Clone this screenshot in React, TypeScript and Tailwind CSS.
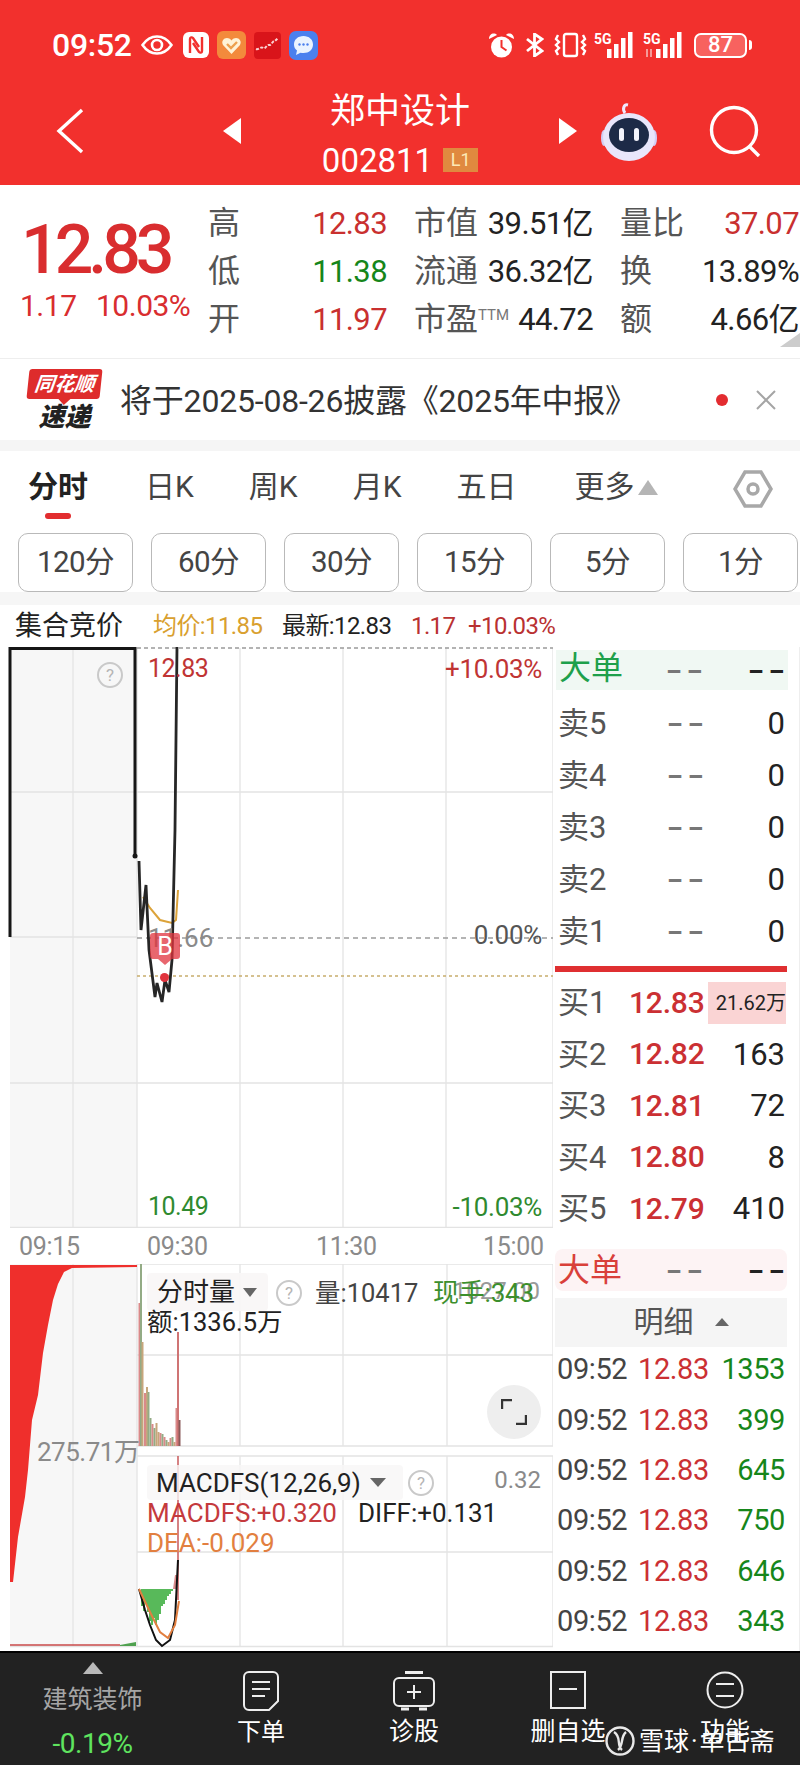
const sellRows = ['卖5', '卖4', '卖3', '卖2', '卖1']

const buyRows = [
  { label: '买1', price: '12.83', vol: '' },
  { label: '买2', price: '12.82', vol: '163' },
  { label: '买3', price: '12.81', vol: '72' },
  { label: '买4', price: '12.80', vol: '8' },
  { label: '买5', price: '12.79', vol: '410' },
]

const trades = ['1353', '399', '645', '750', '646', '343']

const periods = ['120分', '60分', '30分', '15分', '5分', '1分']

const volumeBars = [
  [138.5, 1303, '#d98a8a'],
  [140, 1264, '#93ab85'],
  [141.5, 1342, '#c7a67c'],
  [144, 1393, '#d98a8a'],
  [146, 1387, '#c7a67c'],
  [147.5, 1392, '#93ab85'],
  [149.5, 1418, '#93ab85'],
  [151.5, 1424, '#d98a8a'],
  [153.5, 1428, '#93ab85'],
  [155.5, 1423, '#c7a67c'],
  [157.5, 1432, '#c7a67c'],
  [159.5, 1433, '#d98a8a'],
  [161.5, 1434, '#93ab85'],
  [163.5, 1437, '#d98a8a'],
  [165.5, 1440, '#93ab85'],
  [167.5, 1442, '#c7a67c'],
  [169.5, 1438, '#d98a8a'],
  [171.5, 1437, '#93ab85'],
  [173.5, 1442, '#c7a67c'],
  [175.5, 1408, '#d98a8a'],
  [177, 1332, '#cf7474'],
  [178.5, 1420, '#8a5a5a'],
] as const

const macdBars = [
  [141, 1606], [143, 1611], [145, 1604], [147, 1612], [149, 1621],
  [151, 1625], [153, 1618], [155, 1625], [157, 1620], [159, 1614],
  [161, 1606], [163, 1604], [165, 1600], [167, 1596], [169, 1594], [171, 1591],
] as const

// left edge of the red auction volume curve, top to bottom
const auctionCurve =
  'M10 1265 L137 1265 L137 1267 L72 1268 L64 1272 L58 1284 L53 1300 L48 1325 L43 1353 L38 1395 L32 1420 L28 1470 L25 1497 L18 1537 L13 1582 L10 1582 Z'

function QuestionMark({ className }: { className: string }) {
  return (
    <div className={`absolute flex h-[26px] w-[26px] items-center justify-center rounded-full border-2 border-[#c9c9c9] text-[17px] leading-none text-[#b5b5b5] ${className}`}>
      ?
    </div>
  )
}

function SignalIcon({ updown }: { updown?: boolean }) {
  return (
    <svg viewBox="0 0 44 26" className="h-[26px] w-[44px]" fill="#fff">
      <text x="0" y="12" fontSize="14" fontWeight="700" fontFamily="Roboto">5G</text>
      {updown && <path d="M4 17v8M8 17v8" stroke="#f59a98" strokeWidth="2" />}
      <rect x="13" y="17" width="4.5" height="9" />
      <rect x="20" y="12" width="4.5" height="14" />
      <rect x="27" y="6" width="4.5" height="20" />
      <rect x="34" y="0" width="4.5" height="26" />
    </svg>
  )
}

function StatusBar() {
  return (
    <div className="flex h-[90px] items-center justify-between pl-[52px] pr-[48px] text-white">
      <div className="flex items-center">
        <span className="w-[79px] text-[32px] font-medium leading-none tracking-[-0.3px]">09:52</span>
        <svg viewBox="0 0 32 20" className="ml-[10px] h-[20px] w-[32px]" fill="none" stroke="#fff" strokeWidth="2.6">
          <path d="M1.5 10C6 3.5 11 1.5 16 1.5S26 3.5 30.5 10C26 16.5 21 18.5 16 18.5S6 16.5 1.5 10Z" />
          <circle cx="16" cy="10" r="5" />
        </svg>
        <svg viewBox="0 0 26 26" className="ml-[10px] h-[26px] w-[26px]">
          <rect width="26" height="26" rx="6" fill="#fff" />
          <path d="M7 21V7c0-2 2-2 3-1l6 9M19 5v14c0 2-2 2-3 1l-6-9" fill="none" stroke="#f2302d" strokeWidth="2.4" />
        </svg>
        <svg viewBox="0 0 29 28" className="ml-[8px] h-[28px] w-[29px]">
          <rect width="29" height="28" rx="6" fill="#f38a3c" />
          <path d="M14.5 23 6 14C3 9 10 4 14.5 9.5 19 4 26 9 23 14Z" fill="#fff3d6" />
          <path d="m10 13 4 4 6-6" fill="none" stroke="#eda14e" strokeWidth="2.4" />
        </svg>
        <svg viewBox="0 0 27 27" className="ml-[8px] h-[27px] w-[27px]">
          <rect width="27" height="27" rx="4" fill="#d9141a" />
          <path d="M2 17c3 1 5-3 7-1s4-4 6-3 4-5 6-4l3-3" fill="none" stroke="#fbd2d2" strokeWidth="2" strokeDasharray="3 1.5" />
        </svg>
        <svg viewBox="0 0 29 29" className="ml-[8px] h-[29px] w-[29px]">
          <rect width="29" height="29" rx="7" fill="#4b80ee" />
          <path d="M14.5 5c5.5 0 9.5 3.5 9.5 8.5S20 22 14.5 22c-1 0-2 0-3-.3L7 24l1-4.5c-2-1.500-3-3.500-3-6C5 8.500 9 5 14.500 5Z" fill="#eaf3ff" />
          <circle cx="10.5" cy="13.5" r="1.2" fill="#4b80ee" />
          <circle cx="14.5" cy="13.5" r="1.2" fill="#4b80ee" />
          <circle cx="18.5" cy="13.5" r="1.2" fill="#4b80ee" />
        </svg>
      </div>
      <div className="flex items-center">
        <svg viewBox="0 0 27 27" className="h-[27px] w-[27px]">
          <path d="M1 7c0-5 5-7 8-4ZM26 7c0-5-5-7-8-4Z" fill="#fff" />
          <circle cx="13.5" cy="15" r="10.5" fill="#fff" />
          <path d="M13.5 8v7l5 3.5" fill="none" stroke="#f2302d" strokeWidth="2" />
        </svg>
        <svg viewBox="0 0 19 24" className="ml-[10px] h-[24px] w-[19px]" fill="none" stroke="#fff" strokeWidth="2.8">
          <path d="m2 6 15 12-7.5 5V1L17 6 2 18" />
        </svg>
        <svg viewBox="0 0 33 26" className="ml-[10px] h-[26px] w-[33px]" fill="none" stroke="#fff" strokeWidth="2.4">
          <rect x="10" y="2" width="13" height="22" rx="2" />
          <path d="m4 3-2 4 3 3-3 3 3 3-3 3 2 4M29 3l2 4-3 3 3 3-3 3 3 3-2 4" />
        </svg>
        <div className="ml-[7px]"><SignalIcon /></div>
        <div className="ml-[5px]"><SignalIcon updown /></div>
        <div className="ml-[7px] flex items-center">
          <div className="relative flex h-[25px] w-[53px] items-center justify-center rounded-[7px] border-2 border-white bg-[#f8625f] text-[22px] font-medium leading-none">
            87
          </div>
          <div className="ml-[2px] h-[10px] w-[3px] rounded-r-sm bg-white" />
        </div>
      </div>
    </div>
  )
}

function NavBar() {
  return (
    <div className="flex h-[82px] items-center text-white">
      <svg viewBox="0 0 28 46" className="ml-[56px] h-[46px] w-[28px]" fill="none" stroke="#fff" strokeWidth="3.4">
        <path d="M26 2 3 23l23 21" />
      </svg>
      <div className="ml-[139px] h-0 w-0 border-y-[13px] border-r-[18px] border-y-transparent border-r-white" />
      <div className="flex w-[318px] flex-col items-center pt-[10px]">
        <span className="text-[35px] font-normal leading-[40px]">郑中设计</span>
        <div className="mt-[8px] flex h-[40px] items-center">
          <span className="text-[33px] font-normal leading-none">002811</span>
          <span className="ml-[10px] flex h-[24px] w-[35px] items-center justify-center bg-[#e0893f] text-[18px] leading-none text-[#fde9b6]">L1</span>
        </div>
      </div>
      <div className="h-0 w-0 border-y-[13px] border-l-[18px] border-y-transparent border-l-white" />
      <svg viewBox="0 0 58 60" className="ml-[23px] h-[60px] w-[58px]">
        <path d="M25 12c-3-4-1-9 3-8" fill="none" stroke="#efe9ff" strokeWidth="3" />
        <ellipse cx="4" cy="37" rx="3" ry="8" fill="#d2cdf5" />
        <ellipse cx="54" cy="37" rx="3" ry="8" fill="#d2cdf5" />
        <ellipse cx="29" cy="36" rx="26" ry="24" fill="#e9e6fb" />
        <ellipse cx="29" cy="34" rx="20" ry="17" fill="#1d2a47" />
        <rect x="19" y="27" width="5" height="13" rx="2.5" fill="#f3f3fb" />
        <rect x="34" y="27" width="5" height="13" rx="2.5" fill="#f3f3fb" />
      </svg>
      <svg viewBox="0 0 53 52" className="ml-[51px] h-[52px] w-[53px]" fill="none" stroke="#fff" strokeWidth="3.4">
        <circle cx="25" cy="25" r="22.5" />
        <path d="m40 41 10 10" />
      </svg>
    </div>
  )
}

function QuoteCell({ label, value, valueClass, sup }: { label: string; value: string; valueClass: string; sup?: string }) {
  return (
    <div className="flex h-[48px] items-center justify-between">
      <span className="text-[32px] leading-none text-[#555]">
        {label}
        {sup && <span className="relative top-[-10px] text-[15px] text-[#777]">{sup}</span>}
      </span>
      <span className={`text-[31px] leading-none tracking-[-0.6px] ${valueClass}`}>{value}</span>
    </div>
  )
}

function Quote() {
  return (
    <div className="relative flex h-[174px] border-b border-[#eeeeee]">
      <div className="w-[208px] pl-[20px] pt-[32px] text-[#d92d2f]">
        <div className="h-[66px] pl-[1px] text-[68px] font-medium leading-[66px] tracking-[-5px]">12.83</div>
        <div className="mt-[8px] flex h-[30px] items-center text-[30px] leading-none tracking-[-0.5px]">
          <span className="w-[76px]">1.17</span>
          <span>10.03%</span>
        </div>
      </div>
      <div className="grid grid-cols-[179px_27px_179px_27px_179px] grid-rows-[48px_48px_48px] pt-[14px]">
        <QuoteCell label="高" value="12.83" valueClass="text-[#c9302f]" />
        <div />
        <QuoteCell label="市值" value="39.51亿" valueClass="text-[#222]" />
        <div />
        <QuoteCell label="量比" value="37.07" valueClass="text-[#c9302f]" />
        <QuoteCell label="低" value="11.38" valueClass="text-[#16861a]" />
        <div />
        <QuoteCell label="流通" value="36.32亿" valueClass="text-[#222]" />
        <div />
        <QuoteCell label="换" value="13.89%" valueClass="text-[#222]" />
        <QuoteCell label="开" value="11.97" valueClass="text-[#c9302f]" />
        <div />
        <QuoteCell label="市盈" sup="TTM" value="44.72" valueClass="text-[#222]" />
        <div />
        <QuoteCell label="额" value="4.66亿" valueClass="text-[#222]" />
      </div>
      <div className="absolute bottom-[11px] right-0 h-0 w-0 border-b-[14px] border-l-[20px] border-b-[#cccccc] border-l-transparent" />
    </div>
  )
}

function Notice() {
  return (
    <div className="flex h-[81px] items-center">
      <div className="ml-[28px] flex w-[73px] flex-col items-center">
        <div className="relative flex h-[30px] w-[73px] -skew-x-6 items-center justify-center rounded-[3px] bg-[#de2c2c] text-[20px] font-bold italic leading-none text-white">
          同花顺
          <div className="absolute -bottom-[6px] left-[32px] h-0 w-0 border-x-[6px] border-t-[6px] border-x-transparent border-t-[#de2c2c]" />
        </div>
        <div className="mt-[5px] text-[26px] font-black italic leading-[26px] text-[#222]">速递</div>
      </div>
      <span className="ml-[19px] mt-[3px] w-[502px] whitespace-nowrap text-[32px] leading-none tracking-[-0.2px] text-[#333]">将于2025-08-26披露《2025年中报》</span>
      <div className="ml-[94px] h-[12px] w-[12px] rounded-full bg-[#e32c30]" />
      <svg viewBox="0 0 20 20" className="ml-[28px] h-[20px] w-[20px]" fill="none" stroke="#a5a5a5" strokeWidth="2">
        <path d="m1 1 18 18M19 1 1 19" />
      </svg>
    </div>
  )
}

function Tabs() {
  return (
    <div className="relative flex h-[82px] items-start pl-[28px] pt-[18px] text-[30px] leading-[36px] text-[#444]">
      <span className="font-bold text-[#222]">分时</span>
      <span className="ml-[57px]">日K</span>
      <span className="ml-[55px]">周K</span>
      <span className="ml-[55px]">月K</span>
      <span className="ml-[55px]">五日</span>
      <span className="ml-[58px]">更多</span>
      <div className="ml-[4px] mt-[11px] h-0 w-0 border-x-[10px] border-b-[15px] border-x-transparent border-b-[#b5b5b5]" />
      <svg viewBox="0 0 40 40" className="ml-[75px] h-[40px] w-[40px]" fill="none" stroke="#a8a8a8" strokeWidth="3.5">
        <path d="M12 3h16l10 17-10 17H12L2 20Z" />
        <circle cx="20" cy="20" r="5" />
      </svg>
      <div className="absolute left-[45px] top-[62px] h-[6px] w-[26px] rounded-full bg-[#e22d2f]" />
    </div>
  )
}

function Periods() {
  return (
    <div className="flex h-[59px] gap-[18px] pl-[18px]">
      {periods.map((period) => (
        <div key={period} className="flex h-[59px] w-[115px] shrink-0 items-center justify-center rounded-[10px] border border-[#b9b9b9] text-[29.5px] leading-none tracking-[-0.5px] text-[#444]">
          {period}
        </div>
      ))}
    </div>
  )
}

function Legend() {
  return (
    <div className="flex h-[42px] items-center pl-[15px] text-[24px] leading-none tracking-[-0.6px]">
      <span className="w-[138px] text-[27px] tracking-normal text-[#222]">集合竞价</span>
      <span className="w-[129px] text-[#d9a02f]">均价:11.85</span>
      <span className="w-[129px] text-[#222]">最新:12.83</span>
      <span className="w-[57px] text-[#b93131]">1.17</span>
      <span className="text-[#b93131]">+10.03%</span>
    </div>
  )
}

function PriceChart() {
  return (
    <div className="relative h-[581px] w-[553px]">
      <svg viewBox="0 647 553 581" className="h-[581px] w-[553px]" fill="none">
        <rect x="10" y="647" width="127" height="581" fill="#f7f7f7" />
        <path d="M73 648V1228M137 648V1228M240 648V1228M343 648V1228M446 648V1228M553 648V1228" stroke="#e8e8e8" strokeWidth="1.5" />
        <path d="M10 792H553M10 937H137M10 1083H553M10 1227.5H553" stroke="#e3e3e3" strokeWidth="1.5" />
        <path d="M137 648H553" stroke="#9a9a9a" strokeWidth="1.5" strokeDasharray="4 3" />
        <path d="M137 938H553" stroke="#9c9c9c" strokeWidth="1.5" strokeDasharray="5 4" />
        <path d="M137 976H553" stroke="#c8ad6c" strokeWidth="1.5" strokeDasharray="3 3" />
        <path d="M143 897 150 908 160 920 172 923 176 920 178 890" stroke="#dca33a" strokeWidth="2" />
        <path d="M10 937V648.5H135V855" stroke="#161616" strokeWidth="3" />
        <circle cx="135" cy="856" r="2.5" fill="#161616" />
        <path d="M139 861 141 930 146 885 149 950 155 997 157 983 162 1002 165 980 169 992 172 960 175 830 177 647" stroke="#262626" strokeWidth="2.8" />
      </svg>
      <span className="absolute left-[148px] top-[278px] text-[26px] leading-[26px] text-[#8a8a8a]">11.66</span>
      <div className="absolute left-[150px] top-[286px] flex h-[26px] w-[30px] items-center justify-center rounded-[3px] bg-[#e0333d]/75 text-[25px] leading-none text-white">
        B
        <div className="absolute -bottom-[6px] left-[8px] h-0 w-0 border-x-[7px] border-t-[6px] border-x-transparent border-t-[#e0333d]/75" />
      </div>
      <div className="absolute left-[160px] top-[326px] h-[9px] w-[9px] rounded-full bg-[#e0333d]" />
      <span className="absolute left-[148px] top-[9px] text-[25px] leading-[26px] tracking-[-0.5px] text-[#c03434]">12.83</span>
      <span className="absolute right-[11px] top-[9px] text-[26px] leading-[26px] tracking-[-0.3px] text-[#c03434]">+10.03%</span>
      <span className="absolute right-[11px] top-[275px] text-[26px] leading-[26px] tracking-[-0.3px] text-[#555]">0.00%</span>
      <span className="absolute left-[148px] top-[547px] text-[25px] leading-[26px] tracking-[-0.5px] text-[#2f8a2f]">10.49</span>
      <span className="absolute right-[11px] top-[547px] text-[26px] leading-[26px] tracking-[-0.3px] text-[#2f8a2f]">-10.03%</span>
      <QuestionMark className="left-[97px] top-[15px]" />
    </div>
  )
}

function TimeAxis() {
  return (
    <div className="flex h-[36px] w-[553px] items-center pl-[19px] text-[25px] leading-none tracking-[-0.3px] text-[#8a8a8a]">
      <span className="w-[128px]">09:15</span>
      <span className="w-[169px]">09:30</span>
      <span className="w-[167px]">11:30</span>
      <span>15:00</span>
    </div>
  )
}

function LowerCharts() {
  return (
    <div className="relative h-[387px] w-[553px]">
      <svg viewBox="0 1264 553 387" className="h-[387px] w-[553px]" fill="none">
        <rect x="10" y="1264" width="127" height="383" fill="#f7f7f7" />
        <path d="M73 1264V1646M137 1264V1646M240 1264V1446M343 1264V1446M447 1264V1446M553 1264V1446M240 1456V1646M343 1456V1646M447 1456V1646M553 1456V1646" stroke="#e8e8e8" strokeWidth="1.5" />
        <path d="M137 1264H553M137 1355H553M137 1446H553M137 1456H553M137 1552H553M10 1646.5H553" stroke="#e3e3e3" strokeWidth="1.5" />
        <path d={auctionCurve} fill="#ef2f2c" />
        <path d="M10 1645H120" stroke="#c94a4a" strokeWidth="1.5" />
        <path d="M120 1645 136 1642V1646H120Z" fill="#4fa14f" />
        {volumeBars.map(([x, top, color]) => (
          <rect key={x} x={x} y={top} width="2" height={1446 - top} fill={color} />
        ))}
        <path d="M178 1456V1600" stroke="#c8585a" strokeWidth="1.5" />
        {macdBars.map(([x, bottom]) => (
          <rect key={x} x={x} y="1589" width="2" height={bottom - 1589} fill="#58b95a" />
        ))}
        <path d="M173 1589h5v-14h-3Z" fill="#d98a8a" />
        <path d="M139 1589 145 1610 150 1625 156 1640 162 1646 170 1640 175 1620 178 1560" stroke="#111" strokeWidth="2" />
        <path d="M139 1589 150 1612 160 1632 168 1638 175 1625 179 1601" stroke="#e27f40" strokeWidth="2" />
      </svg>
      <span className="absolute left-[37px] top-[174px] text-[26px] leading-[28px] tracking-[-0.5px] text-[#8a8a8a]">275.71万</span>

      <div className="absolute left-[147px] top-[9px] flex h-[38px] w-[121px] items-center rounded-[4px] bg-[#f8f6f6]/90 pl-[10px] text-[26px] leading-none text-[#222]">
        分时量
        <div className="ml-[8px] h-0 w-0 border-x-[7px] border-t-[9px] border-x-transparent border-t-[#666]" />
      </div>
      <QuestionMark className="left-[276px] top-[16px]" />
      <span className="absolute left-[315px] top-[16px] text-[25.5px] leading-[26px] text-[#444]">量:10417</span>
      <span className="absolute right-[13px] top-[14px] text-[24px] leading-[26px] text-[#9a9a9a]">1027.00</span>
      <span className="absolute left-[433px] top-[16px] text-[26px] leading-[26px] tracking-[-0.2px] text-[#3c8f2c]">现手:343</span>
      <span className="absolute left-[147px] top-[45px] text-[25.5px] leading-[26px] text-[#222]">额:1336.5万</span>

      <div className="absolute left-[487px] top-[121px] flex h-[54px] w-[54px] items-center justify-center rounded-full bg-[#eeeeee]">
        <svg viewBox="0 0 26 26" className="h-[26px] w-[26px]" fill="none" stroke="#333" strokeWidth="2.4">
          <path d="M1 10V1h10M25 16v9H15" />
        </svg>
      </div>

      <div className="absolute left-[147px] top-[201px] flex h-[35px] w-[256px] items-center rounded-[4px] bg-[#f8f6f6]/80 pl-[9px] text-[26px] leading-none text-[#222]">
        MACDFS(12,26,9)
        <div className="ml-[9px] h-0 w-0 border-x-[8px] border-t-[9px] border-x-transparent border-t-[#666]" />
      </div>
      <QuestionMark className="left-[408px] top-[206px]" />
      <span className="absolute right-[12px] top-[203px] text-[24px] leading-[26px] text-[#8a8a8a]">0.32</span>
      <span className="absolute left-[147px] top-[236px] text-[26px] leading-[26px] text-[#c53a3d]">MACDFS:+0.320</span>
      <span className="absolute left-[358px] top-[236px] text-[26px] leading-[26px] text-[#222]">DIFF:+0.131</span>
      <span className="absolute left-[147px] top-[266px] text-[26px] leading-[26px] text-[#e27f40]">DEA:-0.029</span>
    </div>
  )
}

function Dashes({ className }: { className: string }) {
  return (
    <span className={`inline-block w-[37px] origin-left scale-x-150 text-[32px] font-medium leading-none tracking-[3px] ${className}`}>
      --
    </span>
  )
}

function OrderBook() {
  return (
    <div className="w-[247px] border-r border-[#eeeeee] pr-[3px] text-[31px] leading-none">
      <div className="ml-[3px] mt-[3px] flex h-[40px] w-[232px] items-center bg-[#f0f8f3] pl-[3px] pr-[3px]">
        <span className="-mt-[4px] w-[107px] text-[32px] text-[#1ea04b]">大单</span>
        <Dashes className="text-[#777]" />
        <Dashes className="ml-auto text-[#222]" />
      </div>
      <div className="mt-[7px]">
        {sellRows.map((label) => (
          <div key={label} className="flex h-[52px] items-center pl-[5px] pr-[11px]">
            <span className="w-[109px] text-[#555]">{label}</span>
            <Dashes className="text-[#777]" />
            <span className="ml-auto text-[#222]">0</span>
          </div>
        ))}
      </div>
      <div className="ml-[2px] mt-[9px] h-[6px] w-[232px] bg-[#df2f31]" />
      <div className="mt-[5px]">
        {buyRows.map(({ label, price, vol }) => (
          <div key={label} className="flex h-[51.5px] items-center pl-[5px] pr-[11px]">
            <span className="w-[71px] text-[#555]">{label}</span>
            <span className="text-[30px] font-medium tracking-[-0.2px] text-[#cb3033]">{price}</span>
            {vol ? (
              <span className="ml-auto text-[#222]">{vol}</span>
            ) : (
              <span className="ml-auto -mr-[1px] flex h-[42px] w-[78px] items-center justify-end bg-[#fad4d4] text-[20px] text-[#222]">21.62万</span>
            )}
          </div>
        ))}
      </div>
      <div className="ml-[2px] mt-[14px] flex h-[42px] w-[232px] items-center rounded-[8px] bg-[#fdf3f4] pl-[3px] pr-[2px]">
        <span className="w-[108px] text-[32px] text-[#d9403a]">大单</span>
        <Dashes className="text-[#777]" />
        <Dashes className="ml-auto text-[#222]" />
      </div>
      <div className="ml-[2px] mt-[7px] flex h-[49px] w-[232px] items-center justify-center bg-[#f5f5f5] text-[#555]">
        <span className="ml-[20px] text-[30px]">明细</span>
        <div className="ml-[21px] h-0 w-0 border-x-[7px] border-b-[8px] border-x-transparent border-b-[#666]" />
      </div>
      <div className="mt-[-2px] text-[29px]">
        {trades.map((vol, index) => (
          <div key={index} className="flex h-[50.4px] items-center pl-[4px] pr-[11px] tracking-[-0.4px]">
            <span className="w-[81px] text-[#444]">09:52</span>
            <span className="text-[#cb3033]">12.83</span>
            <span className="ml-auto text-[#16861a]">{vol}</span>
          </div>
        ))}
      </div>
    </div>
  )
}

function BottomBar() {
  return (
    <div className="relative flex h-[114px] border-t-[2px] border-black bg-[#222222] text-white">
      <div className="flex w-[184px] flex-col items-center pl-[1px] pt-[9px]">
        <div className="h-0 w-0 border-x-[10px] border-b-[12px] border-x-transparent border-b-[#b9b9b9]" />
        <span className="mt-[12px] text-[25px] leading-[28px] text-[#a5a5a5]">建筑装饰</span>
        <span className="mt-[15px] text-[28px] leading-[30px] tracking-[-0.5px] text-[#5fe45f]">-0.19%</span>
      </div>
      <div className="flex w-[149px] flex-col items-center pl-[5px] pt-[18px]">
        <svg viewBox="0 0 36 40" className="h-[40px] w-[36px]" fill="none" stroke="#eee" strokeWidth="2">
          <path d="M6 1h24a5 5 0 0 1 5 5v24l-9 9H6a5 5 0 0 1-5-5V6a5 5 0 0 1 5-5Z" />
          <path d="M9 11h18M9 18h18M9 25h13" />
        </svg>
        <span className="mt-[7px] text-[24px] leading-[28px]">下单</span>
      </div>
      <div className="flex w-[161px] flex-col items-center pl-[1px] pt-[18px]">
        <svg viewBox="0 0 42 40" className="h-[40px] w-[42px]" fill="none" stroke="#eee" strokeWidth="2">
          <path d="M12 1.5h18" strokeWidth="3" />
          <rect x="1" y="7" width="40" height="28" rx="5" />
          <path d="M21 14v14M14 21h14" />
          <path d="M8 38h8M26 38h8" strokeWidth="3" />
        </svg>
        <span className="mt-[7px] text-[25px] leading-[28px]">诊股</span>
      </div>
      <div className="flex w-[148px] flex-col items-center pt-[18px]">
        <svg viewBox="0 0 36 38" className="h-[38px] w-[36px]" fill="none" stroke="#eee" strokeWidth="2">
          <rect x="1" y="1" width="34" height="36" />
          <path d="M9 18h18" />
        </svg>
        <span className="mt-[9px] text-[25px] leading-[28px]">删自选</span>
      </div>
      <div className="flex w-[158px] flex-col items-center pl-[8px] pt-[18px]">
        <svg viewBox="0 0 38 38" className="h-[38px] w-[38px]" fill="none" stroke="#eee" strokeWidth="2">
          <circle cx="19" cy="19" r="17.5" />
          <path d="M10 13h18M10 25h18" />
        </svg>
        <span className="mt-[9px] text-[25px] leading-[28px]">功能</span>
      </div>
      <div className="absolute left-[605px] top-[73px] flex items-center text-[25px] leading-none text-white">
        <svg viewBox="0 0 30 30" className="h-[30px] w-[30px]" fill="none" stroke="#e8e8e8" strokeWidth="2.4">
          <circle cx="15" cy="15" r="13.5" />
          <path d="M9 6c8 5 2 13 8 18M21 6c-6 5-2 13-8 18" />
        </svg>
        <span className="ml-[4px]">雪球</span>
        <span className="mx-[2px]">·</span>
        <span>单古斋</span>
      </div>
    </div>
  )
}

export default function App() {
  return (
    <div className="h-[1765px] w-[800px] overflow-hidden bg-white font-['Roboto','Noto_Sans_CJK_SC',sans-serif]">
      <div className="h-[185px] bg-[#f2302d]">
        <StatusBar />
        <NavBar />
      </div>
      <Quote />
      <Notice />
      <div className="h-[11px] bg-[#f5f5f5]" />
      <Tabs />
      <Periods />
      <div className="h-[13px] bg-[#f6f6f6]" />
      <Legend />
      <div className="flex">
        <div>
          <PriceChart />
          <TimeAxis />
          <LowerCharts />
        </div>
        <OrderBook />
      </div>
      <BottomBar />
    </div>
  )
}
